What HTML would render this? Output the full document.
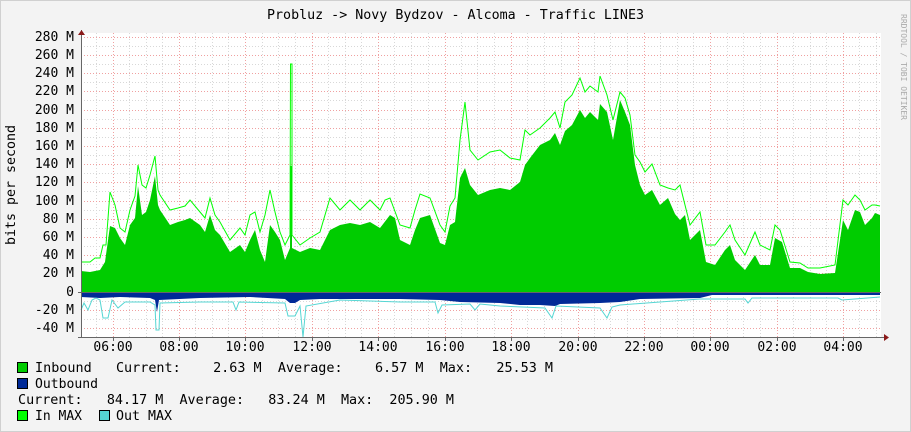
<!DOCTYPE html>
<html><head><meta charset="utf-8"><style>
html,body{margin:0;padding:0;background:#f3f3f3;}
svg{display:block;}
text{font-family:"DejaVu Sans Mono","Liberation Mono",monospace;fill:#000;}
</style></head><body>
<svg width="911" height="432" viewBox="0 0 911 432" xmlns="http://www.w3.org/2000/svg">
<rect x="0" y="0" width="911" height="432" fill="#f3f3f3"/>
<rect x="0.5" y="0.5" width="910" height="431" fill="none" stroke="#d0d0d0"/>
<rect x="81" y="33" width="800" height="304" fill="#ffffff"/>
<g stroke="#d8d8d8" stroke-dasharray="1,2" stroke-width="1">
<path d="M81,46.5H881M81,64.5H881M81,82.5H881M81,100.5H881M81,119.5H881M81,137.5H881M81,155.5H881M81,173.5H881M81,191.5H881M81,210.5H881M81,228.5H881M81,246.5H881M81,264.5H881M81,282.5H881M81,301.5H881M81,319.5H881"/>
<path d="M96.5,33V337M129.5,33V337M146.5,33V337M162.5,33V337M195.5,33V337M212.5,33V337M228.5,33V337M262.5,33V337M278.5,33V337M295.5,33V337M328.5,33V337M345.5,33V337M361.5,33V337M394.5,33V337M411.5,33V337M428.5,33V337M461.5,33V337M477.5,33V337M494.5,33V337M527.5,33V337M544.5,33V337M561.5,33V337M594.5,33V337M610.5,33V337M627.5,33V337M660.5,33V337M677.5,33V337M693.5,33V337M727.5,33V337M743.5,33V337M760.5,33V337M793.5,33V337M810.5,33V337M826.5,33V337M859.5,33V337M876.5,33V337"/>
</g>
<g stroke="#f0a0a0" stroke-dasharray="1,2" stroke-width="1">
<path d="M81,37.5H881M81,55.5H881M81,73.5H881M81,91.5H881M81,110.5H881M81,128.5H881M81,146.5H881M81,164.5H881M81,182.5H881M81,201.5H881M81,219.5H881M81,237.5H881M81,255.5H881M81,273.5H881M81,310.5H881M81,328.5H881"/>
<path d="M113.5,33V337M179.5,33V337M245.5,33V337M312.5,33V337M378.5,33V337M445.5,33V337M511.5,33V337M578.5,33V337M644.5,33V337M710.5,33V337M777.5,33V337M843.5,33V337"/>
</g>
<path fill="#00cc00" d="M81,292 L81,271 L90,272 L100,270 L105,262 L110,226 L115,228 L120,238 L125,245 L130,225 L135,218 L138,186 L142,215 L146,212 L150,200 L155,176 L158,205 L160,210 L170,225 L178,222 L185,220 L190,218 L200,225 L205,232 L210,215 L215,230 L220,235 L230,252 L240,245 L245,252 L250,240 L255,230 L260,250 L265,262 L270,225 L275,232 L280,240 L285,260 L290,248 L290.5,166 L292,166 L292,248 L300,252 L310,248 L320,250 L330,230 L340,225 L350,223 L360,225 L370,222 L380,228 L390,215 L395,218 L400,240 L410,245 L415,230 L420,218 L430,215 L440,243 L445,245 L450,225 L455,222 L460,178 L465,168 L470,185 L478,195 L490,190 L500,188 L510,190 L520,182 L525,165 L530,158 L540,145 L550,140 L555,133 L560,145 L565,131 L572,125 L580,110 L585,118 L590,112 L598,120 L600,104 L607,112 L613,140 L620,100 L625,112 L630,125 L635,165 L640,185 L645,195 L652,190 L660,205 L668,198 L675,214 L680,220 L685,215 L690,240 L700,230 L706,262 L715,265 L725,250 L730,245 L735,260 L745,270 L755,255 L760,265 L770,265 L775,238 L782,242 L790,268 L800,268 L808,272 L820,274 L835,273 L843,220 L848,230 L855,210 L860,212 L865,225 L872,218 L875,213 L880,215 L880,292 Z"/>
<path fill="none" stroke="#00ff00" stroke-width="1" d="M81,262 L90,262 L95,258 L100,258 L103,245 L106,245 L110,192 L115,205 L120,228 L125,232 L130,210 L135,196 L138,165 L142,185 L146,188 L150,175 L155,156 L158,190 L160,195 L170,210 L178,208 L185,206 L190,200 L200,212 L205,218 L210,198 L215,215 L220,222 L230,240 L240,228 L245,235 L250,215 L255,212 L260,232 L265,215 L270,190 L275,212 L280,232 L285,245 L290,235 L290.5,64 L292,64 L292,235 L300,245 L310,238 L320,232 L330,198 L340,210 L350,200 L360,210 L370,200 L380,210 L385,200 L390,198 L400,225 L410,228 L415,210 L420,194 L430,198 L440,225 L445,232 L450,206 L455,198 L460,140 L465,102 L470,150 L478,160 L490,152 L500,150 L510,158 L520,160 L525,130 L530,135 L540,128 L550,118 L555,112 L560,128 L565,102 L572,95 L580,78 L585,92 L590,86 L598,92 L600,76 L607,95 L613,120 L620,92 L625,98 L630,115 L635,155 L640,162 L645,172 L652,164 L660,185 L668,188 L675,190 L680,185 L685,205 L690,225 L700,212 L706,245 L715,245 L725,232 L730,225 L735,240 L745,255 L755,232 L760,245 L770,250 L775,225 L780,230 L790,262 L800,263 L808,268 L820,268 L835,265 L843,200 L848,205 L855,195 L860,200 L865,210 L872,205 L875,205 L880,206"/>
<path fill="#002a97" d="M81,292 L81,297 L100,298 L120,297 L150,298 L155,300 L157,312 L159,300 L200,298 L250,297 L285,299 L290,303 L295,303 L300,300 L320,299 L400,299 L440,300 L460,302 L500,303 L520,305 L540,305 L555,306 L560,304 L600,303 L620,302 L640,299 L700,298 L712,295 L880,295 L880,292 Z"/>
<path fill="none" stroke="#55d6d3" stroke-width="1" d="M81,310 L84,303 L88,310 L92,300 L96,298 L100,300 L103,318 L108,318 L112,300 L118,308 L125,302 L150,302 L155,305 L156,330 L159,330 L160,303 L200,302 L233,302 L236,310 L239,302 L285,303 L288,316 L295,316 L300,306 L303,337 L306,306 L340,300 L400,302 L435,302 L438,313 L442,305 L470,304 L475,310 L480,304 L500,306 L545,308 L552,318 L556,306 L600,308 L607,318 L612,307 L620,305 L700,299 L745,299 L748,303 L752,298 L838,298 L842,300 L880,297"/>
<g stroke="#666" stroke-width="1" fill="none">
<path d="M81.5,30V337M78,292.5H881M78,337.5H885"/>
<path d="M113.5,337V341M179.5,337V341M245.5,337V341M312.5,337V341M378.5,337V341M445.5,337V341M511.5,337V341M578.5,337V341M644.5,337V341M710.5,337V341M777.5,337V341M843.5,337V341"/>
</g>
<path d="M78,35 L81.5,30 L85,35 Z M884,334 L889,337.5 L884,341 Z" fill="#8b1a1a"/>
<text x="267" y="19" font-size="13" textLength="377" lengthAdjust="spacingAndGlyphs">Probluz -&gt; Novy Bydzov - Alcoma - Traffic LINE3</text>
<text transform="translate(901,14) rotate(90)" font-size="8" style="fill:#aaa">RRDTOOL / TOBI OETIKER</text>
<text transform="translate(15,245) rotate(-90)" font-size="13" textLength="120" lengthAdjust="spacingAndGlyphs">bits per second</text>
<g font-size="13" text-anchor="end">
<text x="74" y="41">280 M</text><text x="74" y="59">260 M</text><text x="74" y="77">240 M</text><text x="74" y="95">220 M</text><text x="74" y="114">200 M</text><text x="74" y="132">180 M</text><text x="74" y="150">160 M</text><text x="74" y="168">140 M</text><text x="74" y="186">120 M</text><text x="74" y="205">100 M</text><text x="74" y="223">80 M</text><text x="74" y="241">60 M</text><text x="74" y="259">40 M</text><text x="74" y="277">20 M</text><text x="74" y="296">0</text><text x="74" y="314">-20 M</text><text x="74" y="332">-40 M</text>
</g>
<g font-size="13" text-anchor="middle">
<text x="113" y="351">06:00</text><text x="179" y="351">08:00</text><text x="245" y="351">10:00</text><text x="312" y="351">12:00</text><text x="378" y="351">14:00</text><text x="445" y="351">16:00</text><text x="511" y="351">18:00</text><text x="578" y="351">20:00</text><text x="644" y="351">22:00</text><text x="710" y="351">00:00</text><text x="777" y="351">02:00</text><text x="843" y="351">04:00</text>
</g>
<g stroke="#000" stroke-width="1">
<rect x="17.5" y="362.5" width="10" height="10" fill="#00cc00"/>
<rect x="17.5" y="378.5" width="10" height="10" fill="#002a97"/>
<rect x="17.5" y="410.5" width="10" height="10" fill="#00ff00"/>
<rect x="99.5" y="410.5" width="10" height="10" fill="#55d6d3"/>
</g>
<g font-size="13">
<text x="35" y="372" textLength="518" lengthAdjust="spacingAndGlyphs">Inbound&#160;&#160;&#160;Current:&#160;&#160;&#160;&#160;2.63&#160;M&#160;&#160;Average:&#160;&#160;&#160;&#160;6.57&#160;M&#160;&#160;Max:&#160;&#160;&#160;25.53&#160;M</text>
<text x="35" y="388" textLength="63" lengthAdjust="spacingAndGlyphs">Outbound</text>
<text x="18" y="404" textLength="436" lengthAdjust="spacingAndGlyphs">Current:&#160;&#160;&#160;84.17&#160;M&#160;&#160;Average:&#160;&#160;&#160;83.24&#160;M&#160;&#160;Max:&#160;&#160;205.90&#160;M</text>
<text x="35" y="420" textLength="47" lengthAdjust="spacingAndGlyphs">In&#160;MAX</text>
<text x="116" y="420" textLength="56" lengthAdjust="spacingAndGlyphs">Out&#160;MAX</text>
</g>
</svg>
</body></html>
